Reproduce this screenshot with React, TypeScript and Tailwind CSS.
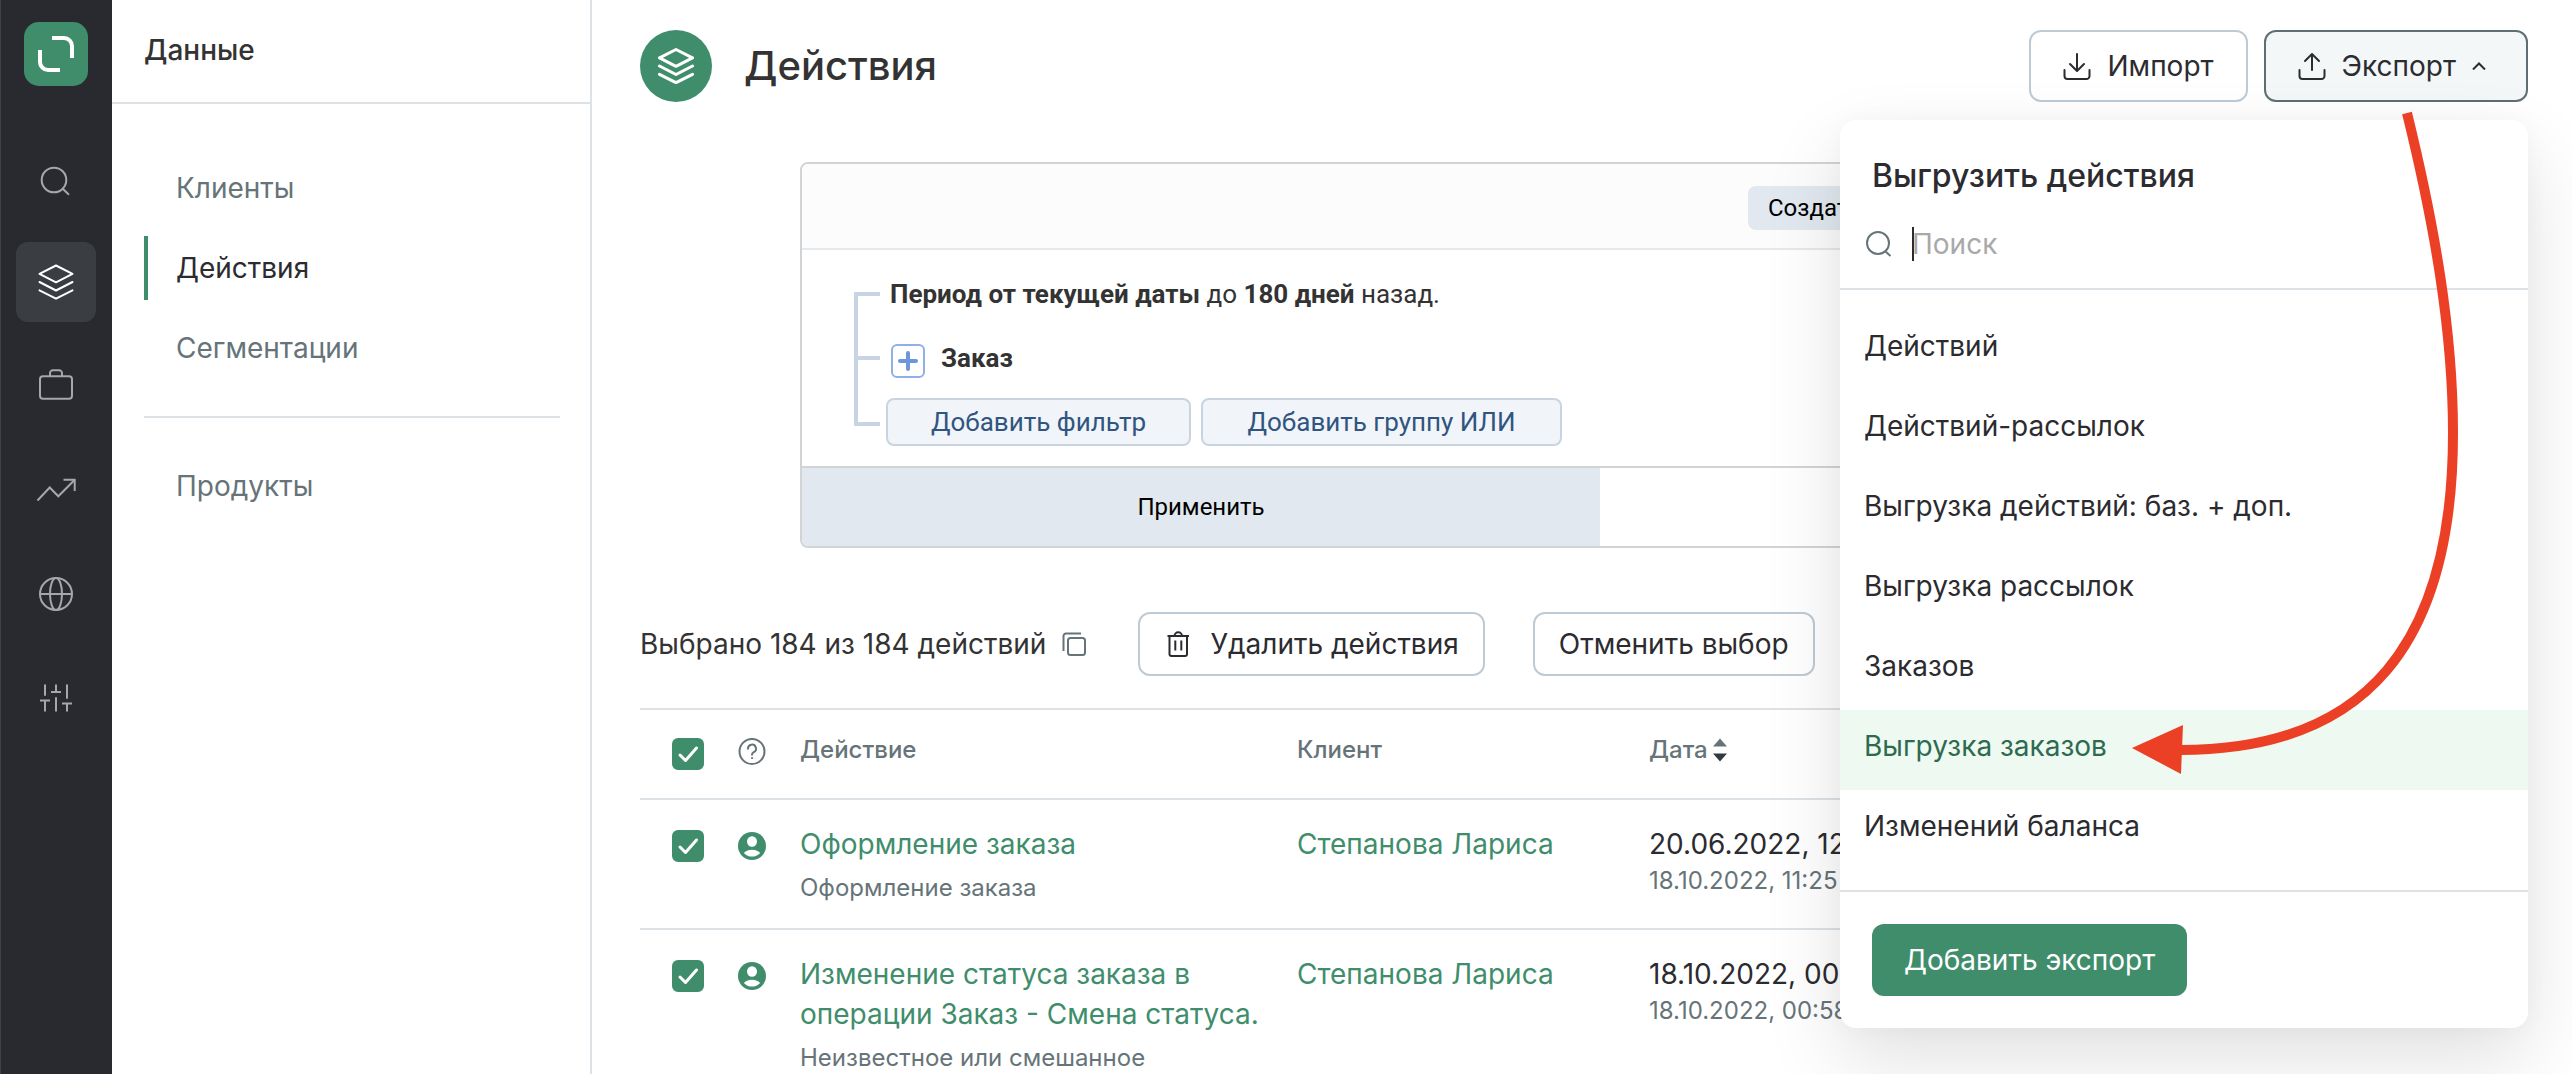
import type { ReactNode } from 'react'

const nav = ['Клиенты', 'Действия', 'Сегментации']

const exportsList = [
  'Действий',
  'Действий-рассылок',
  'Выгрузка действий: баз. + доп.',
  'Выгрузка рассылок',
  'Заказов',
  'Выгрузка заказов',
  'Изменений баланса',
]

const rows = [
  {
    title: 'Оформление заказа',
    note: 'Оформление заказа',
    client: 'Степанова Лариса',
    date: '20.06.2022, 12:20',
    updated: '18.10.2022, 11:25',
  },
  {
    title: 'Изменение статуса заказа в операции Заказ - Смена статуса.',
    note: 'Неизвестное или смешанное',
    client: 'Степанова Лариса',
    date: '18.10.2022, 00:58',
    updated: '18.10.2022, 00:58',
  },
]

function RailIcon({ children }: { children: ReactNode }) {
  return (
    <svg viewBox="0 0 40 40" className="size-10" fill="none" stroke="currentColor" strokeWidth="2">
      {children}
    </svg>
  )
}

function LayersIcon({ bold = false }: { bold?: boolean }) {
  return (
    <svg
      viewBox="0 0 36 36"
      className="size-9"
      fill="none"
      stroke="currentColor"
      strokeWidth={bold ? 3 : 2}
      strokeLinecap="round"
      strokeLinejoin="round"
    >
      <path d="M18 1.5 34.5 9.8 18 18.3 1.5 9.8Z" />
      <path d="M1.5 18 18 26.5 34.5 18" />
      <path d="M1.5 26.3 18 34.7 34.5 26.3" />
    </svg>
  )
}

function Rail() {
  const item = 'flex size-20 items-center justify-center rounded-xl'
  return (
    <aside className="flex w-28 shrink-0 flex-col items-center bg-[#292a2f] pt-[22px] text-[#a5a7aa] shadow-[inset_1px_0_0_#3f4146]">
      <a href="#home" aria-label="Главная" className="mb-[52px]">
        <svg viewBox="0 0 64 64" className="size-16" fill="none" stroke="#fff" strokeWidth="4">
          <rect width="64" height="64" rx="15" fill="#408d6c" stroke="none" />
          <path d="M28 16H40A8 8 0 0 1 48 24V36" />
          <path d="M16 28V40A8 8 0 0 0 24 48H36" />
        </svg>
      </a>
      <nav className="flex flex-col gap-6">
        <a href="#search" aria-label="Поиск" className={item}>
          <RailIcon>
            <circle cx="18" cy="22" r="12.3" />
            <path d="M27 31 33 36.8" />
          </RailIcon>
        </a>
        <a href="#data" aria-label="Данные" className={`${item} bg-[#3a3d42] text-white`}>
          <LayersIcon />
        </a>
        <a href="#campaigns" aria-label="Кампании" className={item}>
          <RailIcon>
            <rect x="4" y="10.3" width="32" height="22.5" rx="3" />
            <path d="M14 10.3V7.5A3 3 0 0 1 17 4.2H23A3 3 0 0 1 26 7.5V10.3" />
          </RailIcon>
        </a>
        <a href="#reports" aria-label="Отчеты" className={item}>
          <RailIcon>
            <path d="M1.5 30.5 13.7 17.5 22.3 26.3 38.5 10" />
            <path d="M27.5 9.7H38.7V21" />
          </RailIcon>
        </a>
        <a href="#sites" aria-label="Сайты" className={item}>
          <RailIcon>
            <circle cx="20" cy="20" r="16" />
            <ellipse cx="20" cy="20" rx="6" ry="16" />
            <path d="M4 20H36" />
          </RailIcon>
        </a>
        <a href="#settings" aria-label="Настройки" className={item}>
          <RailIcon>
            <path d="M9 6.5V17.8M4 22.6H14M9 22.6V33.6" />
            <path d="M20 6.5V14M15 14H25M20 19.3V33.6" />
            <path d="M31 6.5V20.8M26 25.5H36M31 25.5V33.6" />
          </RailIcon>
        </a>
      </nav>
    </aside>
  )
}

function Sidebar() {
  return (
    <aside className="w-[480px] shrink-0 border-r-2 border-[#dce2e6]">
      <h2 className="border-b-2 border-[#dce2e6] pt-[30px] pb-8 pl-8 text-[28px] leading-10 font-medium text-[#333]">Данные</h2>
      <nav className="flex flex-col gap-4 pt-[52px] pr-[30px] pl-8 text-[28px] text-[#667479]">
        {nav.map((name) => (
          <a
            key={name}
            href="#section"
            className={
              name === 'Действия'
                ? 'flex h-16 items-center border-l-4 border-[#408d6c] pl-7 text-[#2b2b30]'
                : 'flex h-16 items-center pl-8'
            }
          >
            {name}
          </a>
        ))}
        <hr className="my-5 border-t-2 border-[#dce2e6]" />
        <a href="#section" className="flex h-16 items-center pl-8">Продукты</a>
      </nav>
    </aside>
  )
}

function FilterPanel() {
  return (
    <section className="mr-32 ml-40 overflow-hidden rounded-lg border-2 border-[#d2d3d4] font-[Roboto,sans-serif] text-[26px] text-[#333]">
      <div className="flex h-[86px] items-center border-b-2 border-[#e4e9ed] bg-[#fcfcfc] pt-1 pl-[946px]">
        <button className="h-11 rounded-lg bg-[#e1e8ef] px-5 text-2xl text-black">Создать</button>
      </div>
      <div className="flex h-[216px] px-[52px] pt-7">
        <svg viewBox="0 0 26 164" className="mt-2 h-[164px] w-[26px] shrink-0" fill="none" stroke="#c6d4e3" strokeWidth="4">
          <path d="M26 8H2V138H26M2 72H26" />
        </svg>
        <div className="pl-[6px]">
          <p className="pl-1 leading-8">
            <b>Период от текущей даты</b> до <b>180 дней</b> назад.
          </p>
          <div className="mt-[34px] flex gap-4 pl-[5px]">
            <button aria-label="Развернуть" className="flex size-[34px] items-center justify-center rounded-md border-2 border-[#8fb0e6]">
              <svg viewBox="0 0 20 20" className="size-5" stroke="#6c97da" strokeWidth="4" strokeLinecap="round">
                <path d="M10 2V18M2 10H18" />
              </svg>
            </button>
            <b className="leading-7">Заказ</b>
          </div>
          <div className="mt-5 flex gap-[10px] text-[#2f5580]">
            <button className="h-12 w-[305px] rounded-lg border-2 border-[#c8d5e0] bg-[#f1f4f8]">Добавить фильтр</button>
            <button className="h-12 w-[361px] rounded-lg border-2 border-[#c8d5e0] bg-[#f1f4f8]">Добавить группу ИЛИ</button>
          </div>
        </div>
      </div>
      <div className="grid h-20 grid-cols-2 border-t-2 border-[#d2d3d4]">
        <button className="bg-[#e1e8ef] text-2xl text-black">Применить</button>
      </div>
    </section>
  )
}

function Checkbox({ label }: { label: string }) {
  return (
    <label className="relative block size-8">
      <input type="checkbox" defaultChecked aria-label={label} className="block size-8 appearance-none rounded-md border-2 border-[#408d6c] checked:bg-[#408d6c]" />
      <svg viewBox="0 0 32 32" className="pointer-events-none absolute inset-0" fill="none" stroke="#fff" strokeWidth="3" strokeLinecap="round" strokeLinejoin="round">
        <path d="M8 17 13.5 22.5 24.5 10" />
      </svg>
    </label>
  )
}

function ActionsTable() {
  return (
    <table className="mt-8 w-full table-fixed border-t-2 border-[#dce2e6] text-left align-top">
      <colgroup>
        <col className="w-[98px]" />
        <col className="w-[62px]" />
        <col className="w-[497px]" />
        <col className="w-[352px]" />
        <col />
      </colgroup>
      <thead>
        <tr className="h-[90px] border-b-2 border-[#dce2e6] align-top text-2xl leading-8 text-[#667479]">
          <th className="pt-7 pl-8">
            <Checkbox label="Выбрать все" />
          </th>
          <th className="pt-7">
            <svg viewBox="0 0 28 28" className="size-7" fill="none" stroke="currentColor" strokeWidth="2" strokeLinecap="round">
              <circle cx="14" cy="13.5" r="12.5" />
              <path d="M10 10.8A4 4 0 1 1 15.8 14.2C14.5 15 14 15.5 14 16.8" />
              <circle cx="14" cy="20" r="0.6" fill="currentColor" strokeWidth="1" />
            </svg>
          </th>
          <th className="pt-6 font-medium">Действие</th>
          <th className="pt-6 font-medium">Клиент</th>
          <th className="pt-6 font-medium">
            <span className="flex items-center gap-1">
              Дата
              <svg viewBox="0 0 16 24" className="h-6 w-4">
                <path d="M8 0.5 15 8.5H1Z" fill="#667479" />
                <path d="M8 23.5 15 15.5H1Z" fill="#333a3f" />
              </svg>
            </span>
          </th>
        </tr>
      </thead>
      <tbody>
        {rows.map((row) => (
          <tr key={row.title} className="border-b-2 border-[#dce2e6] align-top text-[28px] leading-10">
            <td className="pt-[30px] pl-8">
              <Checkbox label={row.title} />
            </td>
            <td className="pt-8">
              <svg viewBox="0 0 28 28" className="size-7">
                <circle cx="14" cy="14" r="14" fill="#408d6c" />
                <ellipse cx="14" cy="9.5" rx="5" ry="5.2" fill="#fff" />
                <path d="M5.8 21C8 18.8 11 17.8 14 17.8S20 18.8 22.2 21C20 23.5 17 24.6 14 24.6S8 23.5 5.8 21Z" fill="#fff" />
              </svg>
            </td>
            <td className="py-6 pr-6">
              <a href="#action" className="block text-[#408d6c]">{row.title}</a>
              <div className="mt-2 text-2xl leading-8 text-[#667479]">{row.note}</div>
            </td>
            <td className="py-6">
              <a href="#client" className="text-[#408d6c]">{row.client}</a>
            </td>
            <td className="py-6 text-[#2b2b30]">
              <div>{row.date}</div>
              <div className="text-2xl leading-[34px] text-[#667479]">{row.updated}</div>
            </td>
          </tr>
        ))}
      </tbody>
    </table>
  )
}

function ExportMenu() {
  return (
    <div className="absolute top-[90px] right-0 z-10 w-[688px] rounded-2xl bg-white shadow-[0_32px_80px_rgba(0,0,0,0.12),0_0_24px_rgba(0,0,0,0.03)]">
      <h2 className="px-8 pt-9 text-[32px] leading-10 font-medium text-[#2b2b30]">Выгрузить действия</h2>
      <label className="flex h-[94px] items-center gap-5 border-b-2 border-[#dce2e6] pt-1 pl-6">
        <svg viewBox="0 0 28 28" className="size-7" fill="none" stroke="#667479" strokeWidth="2">
          <circle cx="14" cy="13" r="11" />
          <path d="M21.5 21.5 26.5 26" />
        </svg>
        <span className="relative flex flex-1 items-center">
          <span className="absolute left-0 h-[34px] w-[2px] bg-[#2b2b30]" />
          <input type="text" placeholder="Поиск" aria-label="Поиск" className="w-full text-[28px] outline-none placeholder:text-[#a9a9a9]" />
        </span>
      </label>
      <ul className="border-b-2 border-[#dce2e6] py-5 text-[28px] leading-10 text-[#2b2b30]">
        {exportsList.map((name) => (
          <li key={name}>
            <button
              className={
                name === 'Выгрузка заказов'
                  ? 'block w-full bg-[#eef9f1] px-6 pt-4 pb-6 text-left text-[#2d6a50]'
                  : 'block w-full px-6 pt-4 pb-6 text-left'
              }
            >
              {name}
            </button>
          </li>
        ))}
      </ul>
      <div className="p-8">
        <button className="h-[72px] rounded-xl bg-[#408d6c] px-8 text-[28px] text-white">Добавить экспорт</button>
      </div>
      {/* pointer from the button to the export we need */}
      <svg viewBox="0 0 688 700" className="pointer-events-none absolute -top-5 left-0 h-[700px] w-[688px]">
        <path d="M567 13C594 123 613 230 613 333C613 540 530 652 335 650" fill="none" stroke="#ec4026" strokeWidth="10" />
        <path d="M292 648 343 625 341 674Z" fill="#ec4026" />
      </svg>
    </div>
  )
}

export default function App() {
  const outline = 'flex items-center rounded-xl border-2 text-[28px] text-[#2b2b30]'
  return (
    <div className="flex h-screen overflow-hidden bg-white font-['Inter',sans-serif]">
      <Rail />
      <Sidebar />
      <main className="min-w-0 flex-1 pt-[30px] pr-11 pl-12">
        <header className="flex items-center">
          <span className="flex size-[72px] items-center justify-center rounded-full bg-[#408d6c] text-white">
            <LayersIcon bold />
          </span>
          <h1 className="ml-8 text-[40px] leading-[48px] font-medium text-[#333]">Действия</h1>
          <div className="relative ml-auto flex gap-4">
            <button className={`${outline} h-[72px] gap-4 border-[#bfcbd4] px-8`}>
              <svg viewBox="0 0 28 28" className="size-7" fill="none" stroke="currentColor" strokeWidth="2" strokeLinecap="round" strokeLinejoin="round">
                <path d="M14 2V18M7 12 14 19 21 12" />
                <path d="M1.5 18V24A3 3 0 0 0 4.5 27H23.5A3 3 0 0 0 26.5 24V18" />
              </svg>
              Импорт
            </button>
            <button className={`${outline} h-[72px] gap-4 border-[#5f6e72] bg-[#f3f7f8] pr-10 pl-8`}>
              <svg viewBox="0 0 28 28" className="size-7" fill="none" stroke="currentColor" strokeWidth="2" strokeLinecap="round" strokeLinejoin="round">
                <path d="M14 18V2M7 9 14 2 21 9" />
                <path d="M1.5 18V24A3 3 0 0 0 4.5 27H23.5A3 3 0 0 0 26.5 24V18" />
              </svg>
              Экспорт
              <svg viewBox="0 0 14 8" className="h-2 w-[14px]" fill="none" stroke="currentColor" strokeWidth="2">
                <path d="M1 7.5 7 1.5 13 7.5" />
              </svg>
            </button>
            <ExportMenu />
          </div>
        </header>

        <div className="mt-[60px]">
          <FilterPanel />
        </div>

        <div className="mt-16 flex items-center text-[28px] text-[#333]">
          Выбрано 184 из 184 действий
          <button aria-label="Копировать" className="ml-4 text-[#667479]">
            <svg viewBox="0 0 24 24" className="size-6" fill="none" stroke="currentColor" strokeWidth="2" strokeLinejoin="round">
              <rect x="6" y="6" width="17" height="17" rx="2.5" />
              <path d="M1.5 19V4A2.5 2.5 0 0 1 4 1.5H19" />
            </svg>
          </button>
          <button className={`${outline} ml-[52px] h-16 gap-[18px] border-[#bfcbd4] px-6`}>
            <svg viewBox="0 0 28 28" className="size-7" fill="none" stroke="currentColor" strokeWidth="2" strokeLinejoin="round">
              <path d="M3.5 6H25M10.5 6A3.7 3.7 0 0 1 18 6" />
              <path d="M5.5 6V24A2 2 0 0 0 7.5 26H21A2 2 0 0 0 23 24V6M11.3 10.5V20.5M17.3 10.5V20.5" />
            </svg>
            Удалить действия
          </button>
          <button className={`${outline} ml-12 h-16 border-[#bfcbd4] px-6`}>Отменить выбор</button>
        </div>

        <ActionsTable />
      </main>
    </div>
  )
}
